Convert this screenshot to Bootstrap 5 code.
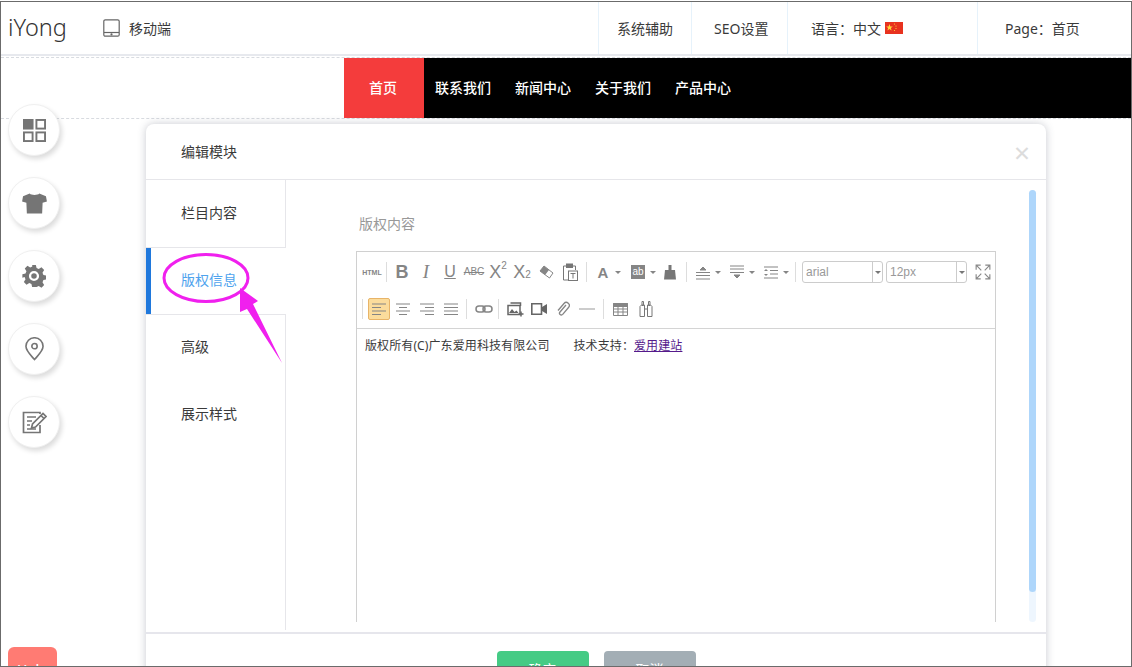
<!DOCTYPE html>
<html lang="zh">
<head>
<meta charset="utf-8">
<title>iYong</title>
<link href="https://cdn.jsdelivr.net/npm/bootstrap@5.3.0/dist/css/bootstrap.min.css" rel="stylesheet">
<style>
html,body{margin:0;height:667px;overflow:hidden;background:#fff}
body{font-family:"Noto Sans","Noto Sans CJK SC",sans-serif;font-size:14px;color:#3a3a3a}
.frame{margin-top:1px;height:666px;border:1px solid #6b6b6b;overflow:hidden;background:#fff;position:relative}
.topbar{height:54px;border-bottom:2px solid #e7e9ee}
.brand{font-size:23.5px;line-height:1;width:102px;padding-left:7px;color:#333;font-weight:300}
.mobile-link{gap:9px;width:495px}
.top-cell{height:52px;border-left:1px solid #e6f2fb;white-space:nowrap}
.tc1{width:93px;padding-left:18px}.tc2{width:96px;padding-left:22px}
.tc3{width:190px;padding-left:23px;gap:4px}.tc4{flex:1;padding-left:27px}
.dash-row{border-top:1px dashed #d8dbe0;border-bottom:1px dashed #d8dbe0;margin-top:1px;height:62px;display:flex;padding-left:343px}
.black-nav{flex:1;background:#000;display:flex}
.navcell{width:80px;color:#fff;font-weight:500;display:flex;align-items:center;justify-content:center;padding:0 2px 2px 0}
.navcell.on{background:#f43c3c}
.floatbar{position:absolute;left:7px;top:102px;gap:21px}
.fab{width:52px;height:52px;border-radius:50%;background:#fff;border:1px solid #f0f0f0;box-shadow:2px 3px 5px rgba(0,0,0,.14)}
.help-btn{position:absolute;left:7px;top:645px;width:49px;height:40px;background:#ff7b73;color:#fff;border-radius:6px;text-align:center;padding-top:12px;font-weight:500}
.edit-dialog{position:absolute;left:145px;top:122px;width:900px;height:620px;background:#fff;border-radius:8px;box-shadow:0 0 8px rgba(60,70,90,.28)}
.dlg-head{height:56px;padding-left:35px;border-bottom:1px solid #e6e6ea}
.dlg-x{font-size:28px;line-height:1;color:#dcdcdc;margin-right:16px}
.dlg-body{height:452px}
.tab-col{width:140px;border-right:1px solid #e6e6ea;height:450px}
.tab-cell{height:67px;padding-left:35px;padding-bottom:2px;display:flex;align-items:center;color:#3a3a3a}
.tc-a{border-bottom:1px solid #e6e6ea;height:68px;padding-bottom:3px}
.tc-b{height:66px;background:#fff;margin-right:-1px;border-left:5px solid #1f78dc;padding-left:30px;color:#4ea3ee;padding-bottom:3px}
.tc-c{border-top:1px solid #e6e6ea;padding-bottom:3px}
.main-col{flex:1;padding-top:34px}
.wrap-left{margin-left:70px;width:640px}
.fld-label{color:#999;line-height:20px;margin-bottom:17px;padding-left:3px}
.ue-box{width:640px;height:371px;border:1px solid #d0d0d0;border-bottom:0}
.ue-bar{height:77px;border-bottom:1px solid #d4d4d4;padding:8px 0 0 3px}
.ue-row{height:24px;margin-bottom:13px;display:flex;align-items:center}
.ue-t{width:24px;height:24px;display:flex;align-items:center;justify-content:center;color:#858585;flex:none}
.ue-t svg{display:block}
.ue-txt{font-family:"Liberation Sans",sans-serif;line-height:1}
.ue-sep{width:1px;height:20px;background:#ddd;margin:0 4px;flex:none}
.sepA{margin:0 3px 0 2px}
.ue-car{width:0;height:0;border-left:3px solid transparent;border-right:3px solid transparent;border-top:3px solid #858585;margin:0 2px 0 0;flex:none}
.ue-on{width:22px;height:22px;background:#fbdc9c;border:1px solid #e8b468;border-radius:2px;margin:0 1px 0 5px}
.ue-sel{width:81px;height:22px;border:1px solid #ccc;border-radius:3px;display:flex;color:#999;font-family:"Liberation Sans",sans-serif;font-size:12px;line-height:20px;padding-left:3px;margin-right:3px;flex:none}
.ue-sel span:first-child{flex:1}
.sel-arrow{width:10px;border-left:1px solid #ccc;display:flex;align-items:center;justify-content:center}
.sel-arrow::after{content:"";border-left:3px solid transparent;border-right:3px solid transparent;border-top:3px solid #777}
.ue-doc{font-size:12px;line-height:16px;padding:9px 8px;color:#3a3a3a;letter-spacing:.1px}
.ue-doc a{color:#551a8b}
.ue-gap{margin-left:24px}
.scroll-track{width:7px;height:432px;margin:-24px 0 0 33px;border-radius:4px;background:#eef6fe}
.scroll-thumb{height:402px;border-radius:4px;background:#aed6fb}
.dlg-foot{border-top:2px solid #e6e6ec;padding-top:17px;gap:15px}
.act{width:92px;height:40px;border-radius:4px;color:#fff;text-align:center;padding-top:8px}
.act-ok{background:#45cb85}.act-no{background:#a3aeb5}
.mark-layer{position:absolute;left:0;top:0;pointer-events:none}
</style>
</head>
<body>
<div class="frame">
  <header class="topbar d-flex align-items-center">
    <div class="brand">iYong</div>
    <div class="mobile-link d-flex align-items-center">
      <svg width="17" height="18" viewBox="0 0 17 18" fill="none" stroke="#666" stroke-width="1.2"><rect x=".8" y=".8" width="15.4" height="16.4" rx="1.5"/><path d="M1 13.5h15"/><circle cx="8.5" cy="15.4" r=".5" fill="#666"/></svg>
      <span>移动端</span>
    </div>
    <div class="top-cell tc1 d-flex align-items-center">系统辅助</div>
    <div class="top-cell tc2 d-flex align-items-center">SEO设置</div>
    <div class="top-cell tc3 d-flex align-items-center"><span>语言：中文</span>
      <svg width="18" height="12" viewBox="0 0 18 12"><rect width="18" height="12" fill="#e8321f"/><path d="M4.5 2l.9 2.4 2.4.1-1.9 1.5.7 2.4-2.1-1.4-2.1 1.4.7-2.4L1.200 4.500l2.400-.1z" fill="#ffd83a"/><circle cx="9.500" cy="2" r=".6" fill="#ffd83a"/><circle cx="11" cy="4" r=".6" fill="#ffd83a"/><circle cx="11" cy="6.500" r=".6" fill="#ffd83a"/><circle cx="9.500" cy="8.500" r=".6" fill="#ffd83a"/></svg>
    </div>
    <div class="top-cell tc4 d-flex align-items-center">Page：首页</div>
  </header>

  <div class="dash-row">
    <nav class="black-nav">
      <div class="navcell on">首页</div>
      <div class="navcell">联系我们</div>
      <div class="navcell">新闻中心</div>
      <div class="navcell">关于我们</div>
      <div class="navcell">产品中心</div>
    </nav>
  </div>

  <div class="floatbar d-flex flex-column">
    <div class="fab d-flex align-items-center justify-content-center">
      <svg width="23" height="23" viewBox="0 0 24 24" fill="none" stroke="#757575" stroke-width="2"><rect x="1" y="1" width="9" height="9" fill="#757575"/><rect x="14" y="1" width="9" height="9"/><rect x="1" y="14" width="9" height="9"/><rect x="14" y="14" width="9" height="9"/></svg>
    </div>
    <div class="fab d-flex align-items-center justify-content-center">
      <svg width="25" height="21" viewBox="0 0 26 22" fill="#757575"><path d="M8 .5C9.500 2.500 16.500 2.500 18 .5L25 3.500 26 9 21.500 10.200 21 21.500H5L4.500 10.200 0 9 1 3.500z"/></svg>
    </div>
    <div class="fab d-flex align-items-center justify-content-center">
      <svg width="24" height="24" viewBox="-1 -1 26 26"><path fill="#757575" fill-rule="evenodd" d="M10 0h4l.8 3.400 2.300 1 3-1.800 2.900 2.900-1.800 3 1 2.300 3.400.8v4l-3.400.8-1 2.300 1.800 3-2.900 2.900-3-1.800-2.300 1L14 24h-4l-.8-3.400-2.300-1-3 1.800-2.900-2.900 1.800-3-1-2.300L-.6 14v-4l3.400-.8 1-2.300-1.800-3 2.900-2.900 3 1.800 2.300-1zM12 6.500a5.500 5.500 0 1 0 0 11 5.500 5.500 0 0 0 0-11z"/><circle cx="12" cy="12" r="3" fill="#757575"/></svg>
    </div>
    <div class="fab d-flex align-items-center justify-content-center">
      <svg width="19" height="24" viewBox="0 0 20 25" fill="none" stroke="#757575" stroke-width="1.700"><path d="M10 23.500C5 18 1 14.500 1 9.700a9 9 0 0 1 18 0C19 14.500 15 18 10 23.500z"/><circle cx="10" cy="9.500" r="2.800"/></svg>
    </div>
    <div class="fab d-flex align-items-center justify-content-center">
      <svg width="25" height="23" viewBox="0 0 25 23" fill="none" stroke="#757575" stroke-width="1.700"><path d="M18 3V1.500H1.500v20H18V14"/><path d="M5 6h9M5 10h5M5 14h3M5 18h9" stroke-width="1.500"/><path d="M9.500 17l1-4L21 2.500l3 3L13.500 16z" fill="#fff"/><path d="M19 4.500l3 3" /></svg>
    </div>
  </div>

  <div class="help-btn">Help</div>

  <div class="edit-dialog d-flex flex-column">
    <div class="dlg-head d-flex align-items-center justify-content-between">
      <span>编辑模块</span>
      <span class="dlg-x">×</span>
    </div>
    <div class="dlg-body d-flex">
      <div class="tab-col flex-none">
        <div class="tab-cell tc-a">栏目内容</div>
        <div class="tab-cell tc-b">版权信息</div>
        <div class="tab-cell tc-c">高级</div>
        <div class="tab-cell">展示样式</div>
      </div>
      <div class="main-col d-flex">
        <div class="wrap-left">
          <div class="fld-label">版权内容</div>
          <div class="ue-box">
            <div class="ue-bar">
              <div class="ue-row">
                <div class="ue-t ue-txt fw-bold" style="font-size:7px">HTML</div>
                <div class="ue-sep sepA"></div>
                <div class="ue-t ue-txt fw-bold" style="font-size:18px">B</div>
                <div class="ue-t" style="font-size:19px;font-family:'Liberation Serif',serif;font-style:italic">I</div>
                <div class="ue-t ue-txt" style="font-size:16px;text-decoration:underline">U</div>
                <div class="ue-t ue-txt" style="font-size:10px;text-decoration:line-through">ABC</div>
                <div class="ue-t ue-txt" style="font-size:18px">X<sup style="font-size:10px;top:-.6em">2</sup></div>
                <div class="ue-t ue-txt" style="font-size:18px">X<sub style="font-size:10px;bottom:-.3em">2</sub></div>
                <div class="ue-t"><svg width="15" height="14" viewBox="0 0 15 14"><path d="M5 1l9 7-3.500 5L1 6z" fill="#fff" stroke="#858585" stroke-width="1"/><path d="M5 1L1 6l5 4 4-5z" fill="#858585"/></svg></div>
                <div class="ue-t"><svg width="16" height="18" viewBox="0 0 16 18" fill="none" stroke="#777"><path d="M4 3H1.500v14H6M11 3h2.500v4"/><rect x="4.500" y="1" width="6" height="3.500" fill="#777"/><rect x="6.500" y="8" width="9" height="9.500"/><path d="M8.500 10.500h5M11 10.500v5"/></svg></div>
                <div class="ue-sep"></div>
                <div class="ue-t ue-txt fw-bold" style="font-size:15px">A</div><span class="ue-car"></span>
                <div class="ue-t" style="margin-left:3px"><span class="ue-txt d-block" style="background:#858585;color:#fff;font-size:10px;padding:2px 1px;width:14px;text-align:center">ab</span></div><span class="ue-car"></span>
                <div class="ue-t"><svg width="14" height="15" viewBox="0 0 14 15" fill="#777"><rect x="5.500" y="0" width="3" height="5"/><path d="M2 5h10l1 9.500H1z"/></svg></div>
                <div class="ue-sep"></div>
                <div class="ue-t"><svg width="16" height="15" viewBox="0 0 16 15" stroke="#858585" fill="none"><path d="M1 7.500h14M1 10.500h14M1 14h14"/><path d="M5 5l3-3 3 3z" fill="#858585"/></svg></div><span class="ue-car"></span>
                <div class="ue-t" style="margin-left:2px"><svg width="16" height="15" viewBox="0 0 16 15" stroke="#858585" fill="none"><path d="M1 1h14M1 4h14M1 7.500h14"/><path d="M5 10l3 3 3-3z" fill="#858585"/></svg></div><span class="ue-car"></span>
                <div class="ue-t" style="margin-left:2px"><svg width="16" height="13" viewBox="0 0 16 13" stroke="#858585" fill="none"><path d="M1 1h14M7 4.500h8M7 8h8M1 12h14"/><path d="M1 5l2-2 2 2zM1 8l2 2 2-2z" fill="#858585" stroke="none"/></svg></div><span class="ue-car"></span>
                <div class="ue-sep" style="margin:0 6px 0 4px"></div>
                <div class="ue-sel"><span>arial</span><span class="sel-arrow"></span></div>
                <div class="ue-sel"><span>12px</span><span class="sel-arrow"></span></div>
                <div class="ue-t" style="margin-left:1px"><svg width="16" height="16" viewBox="0 0 14 14" fill="none" stroke="#888"><path d="M1 5V1h4M9 1h4v4M1 9v4h4M13 9v4H9M1.500 1.500l4 4M12.500 1.500l-4 4M1.500 12.500l4-4M12.500 12.500l-4-4"/></svg></div>
              </div>
              <div class="ue-row">
                <div class="ue-sep" style="margin:0 0 0 2px"></div>
                <div class="ue-on ue-t"><svg width="14" height="12" viewBox="0 0 14 12" stroke="#858585"><path d="M0 1h14M0 4.500h9M0 8h14M0 11.500h9"/></svg></div>
                <div class="ue-t"><svg width="14" height="12" viewBox="0 0 14 12" stroke="#858585"><path d="M0 1h14M3 4.500h8M0 8h14M3 11.500h8"/></svg></div>
                <div class="ue-t"><svg width="14" height="12" viewBox="0 0 14 12" stroke="#858585"><path d="M0 1h14M5 4.500h9M0 8h14M5 11.500h9"/></svg></div>
                <div class="ue-t"><svg width="14" height="12" viewBox="0 0 14 12" stroke="#858585"><path d="M0 1h14M0 4.500h14M0 8h14M0 11.500h14"/></svg></div>
                <div class="ue-sep" style="margin:0 5px 0 3px"></div>
                <div class="ue-t"><svg width="18" height="8" viewBox="0 0 18 8" fill="none" stroke="#858585" stroke-width="1.500"><rect x="1" y="1" width="9" height="6" rx="3"/><rect x="8" y="1" width="9" height="6" rx="3"/></svg></div>
                <div class="ue-sep" style="margin:0 4px 0 2px"></div>
                <div class="ue-t"><svg width="17" height="15" viewBox="0 0 17 15" fill="none" stroke="#666" stroke-width="1.500"><path d="M3.500 1h10v3M1 3.500h12v9H1z"/><path d="M2 11l3-4 2.500 3 2-1.500 2 2.500z" fill="#666" stroke="none"/><path d="M14 9.500v5M11.500 12h5"/></svg></div>
                <div class="ue-t"><svg width="16" height="12" viewBox="0 0 16 12" fill="#666"><path d="M.8.800h9.700v10.400H.8z" fill="none" stroke="#666" stroke-width="1.600"/><path d="M11 4l5-3v10l-5-3z"/></svg></div>
                <div class="ue-t"><svg width="14" height="16" viewBox="0 0 14 16" fill="none" stroke="#858585" stroke-width="1.300"><path d="M10 4l-6 7a1.800 1.800 0 0 0 2.700 2.400L12.500 6.500a3 3 0 0 0-4.500-4L2 9.500"/></svg></div>
                <div class="ue-t"><svg width="16" height="2" viewBox="0 0 16 2"><path d="M0 1h16" stroke="#999"/></svg></div>
                <div class="ue-sep"></div>
                <div class="ue-t"><svg width="15" height="13" viewBox="0 0 15 13" fill="none" stroke="#858585"><path d="M.5.500h14v12H.5zM.5 6h14M.5 9h14M5 3.500v9M10 3.500v9"/><path d="M.5.500h14v3H.5z" fill="#858585"/></svg></div>
                <div class="ue-t" style="margin-left:2px"><svg width="14" height="16" viewBox="0 0 14 16" fill="none" stroke="#777"><path d="M3 .5h1.500v4H3zM9.500.5H11v4H9.500zM1 5.500l1.500-1.500h3V15.500H1zM8.500 4h3L13 5.500v10H8.500zM5.500 8h3"/></svg></div>
              </div>
            </div>
            <div class="ue-doc">版权所有(C)广东爱用科技有限公司<span class="ue-gap">技术支持：</span><a href="#">爱用建站</a></div>
          </div>
        </div>
        <div class="scroll-track"><div class="scroll-thumb"></div></div>
      </div>
    </div>
    <div class="dlg-foot d-flex justify-content-center">
      <div class="act act-ok">确定</div>
      <div class="act act-no">取消</div>
    </div>
  </div>

  <svg class="mark-layer" width="1130" height="665" viewBox="1 2 1130 665">
    <ellipse cx="206" cy="278" rx="42" ry="23.500" fill="none" stroke="#f020ee" stroke-width="3"/>
    <path d="M240 288L258 301 253 304 282 363 247 309 240 312z" fill="#f020ee"/>
  </svg>
</div>
<script src="https://cdn.jsdelivr.net/npm/bootstrap@5.3.0/dist/js/bootstrap.bundle.min.js"></script>
</body>
</html>
